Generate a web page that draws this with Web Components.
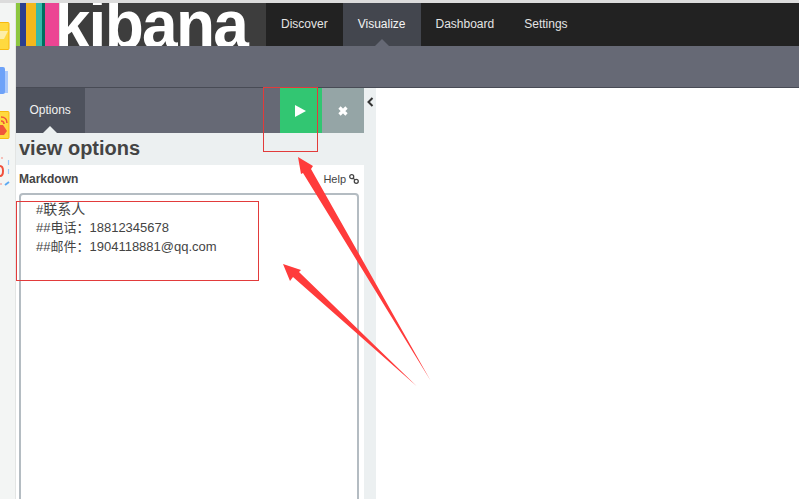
<!DOCTYPE html>
<html lang="zh">
<head>
<meta charset="utf-8">
<title>Kibana - Visualize</title>
<style>
  html, body { margin: 0; height: 100%; overflow: hidden; background: #fff; }
  body { font-family: "Liberation Sans", "Noto Sans CJK SC", sans-serif; }
</style>
</head>
<body>
<kb-app></kb-app>

<script>

class KbRail extends HTMLElement {

  constructor () {

    super();

    this.attachShadow( { mode: 'open' } ).innerHTML = `
      <style>
        :host { display: flex; flex-direction: column; flex: none; width: 15px; padding-top: 19px; gap: 17px; background: #f3f5f4; border-right: 1px solid #e3e5e4; overflow: hidden; }
        svg { display: block; flex: none; }
      </style>
      <svg width="10" height="29" viewBox="0 0 10 29">
        <rect x="-4" y=".5" width="13" height="27" rx="1" fill="#ffd93f" stroke="#f7b90f"/>
        <path d="M0 9h8l-4 8H0z" fill="#fdeea8"/>
      </svg>
      <svg width="10" height="27" viewBox="0 0 10 27" style="margin-top:-1px">
        <rect x="3" y="4" width="5" height="22" fill="#a9c8fb"/>
        <rect x="-3" y="0" width="8" height="27" rx="2" fill="#6da2f8"/>
      </svg>
      <svg width="10" height="29" viewBox="0 0 10 29">
        <rect x="-4" y=".5" width="13" height="27" rx="1" fill="#ffd93f" stroke="#f7b90f"/>
        <path d="M1 6c4 0 6 3 6 6M1 10c2 0 3 1 3 3" fill="none" stroke="#f0563a" stroke-width="1.6"/>
        <path d="M-1 14h4l4 6-3 4h-5z" fill="#f0563a"/>
      </svg>
      <svg width="10" height="29" viewBox="0 0 10 29">
        <path d="M1 1h2" stroke="#f58a7c" stroke-width="1.2"/>
        <path d="M0 9c2 0 3 2 3 5s-1 5-3 5" fill="none" stroke="#f0503c" stroke-width="2"/>
        <path d="M8.500 3v5M8.500 12v5" stroke="#9cc8f7" stroke-width="1.2"/>
        <path d="M5 28l4-3" stroke="#5ba9f2" stroke-width="1.8"/>
        <path d="M0 27h2" stroke="#f58a7c" stroke-width="1.2"/>
      </svg>
    `;

  }

}

class KbLogo extends HTMLElement {

  constructor () {

    super();

    this.attachShadow( { mode: 'open' } ).innerHTML = `
      <style>
        :host { display: flex; flex: none; width: 250px; height: 43px; background: #3d3d3d; overflow: hidden; }
        i { display: block; flex: none; }
        b { flex: none; color: #fff; font: bold 64px/43px "Liberation Sans", sans-serif; letter-spacing: -1.700px; margin: -1px 0 0 -4.300px; height: 44px; transform: scaleY(1.07); transform-origin: top; }
      </style>
      <i style="width:4px;background:#8cc63f"></i>
      <i style="width:6px;background:#2b3f8f"></i>
      <i style="width:10px;background:#f4b81c"></i>
      <i style="width:6px;background:#36b8ac"></i>
      <i style="width:3px;background:#006f5f"></i>
      <i style="width:14px;background:#ec4593"></i>
      <b>kibana</b>
    `;

  }

}

class KbNavItem extends HTMLElement {

  constructor () {

    super();

    this.attachShadow( { mode: 'open' } ).innerHTML = `
      <style>
        :host { display: flex; align-items: center; position: relative; padding: 0 15px 2px; font-size: 12px; color: #e4e4e4; }
        :host([active]) { background: #43464e; color: #f4f4f4; }
        :host([active])::after { content: ''; position: absolute; left: 50%; bottom: 0; margin-left: -7px; border: 7px solid transparent; border-top: 0; border-bottom-color: #666975; }
      </style>
      <slot></slot>
    `;

  }

}

class KbNavbar extends HTMLElement {

  constructor () {

    super();

    this.attachShadow( { mode: 'open' } ).innerHTML = `
      <style>
        :host { display: flex; flex: none; height: 43px; background: #222; }
      </style>
      <kb-logo></kb-logo>
      <kb-nav-item>Discover</kb-nav-item>
      <kb-nav-item active>Visualize</kb-nav-item>
      <kb-nav-item>Dashboard</kb-nav-item>
      <kb-nav-item>Settings</kb-nav-item>
    `;

  }

}

class KbSidebar extends HTMLElement {

  constructor () {

    super();

    this.attachShadow( { mode: 'open' } ).innerHTML = `
      <style>
        :host { display: flex; flex: none; width: 360px; background: #ecf0f1; overflow: hidden; }
        .column { width: 348px; flex: none; display: flex; flex-direction: column; }
        .toolbar { display: flex; height: 45px; flex: none; background: #666975; }
        .tab { position: relative; display: flex; align-items: center; padding: 0 14px 2px 13.500px; background: #4e525d; color: #f2f2f2; font-size: 12px; }
        .tab::after { content: ''; position: absolute; left: 50%; bottom: 0; margin-left: -7px; border: 7px solid transparent; border-top: 0; border-bottom-color: #ecf0f1; }
        .spacer { flex: 1; }
        .btn { width: 42px; display: flex; align-items: center; justify-content: center; }
        .apply { background: #32c672; padding-right: 1px; box-sizing: border-box; }
        .discard { background: #95a5a6; }
        h2 { margin: 0; height: 32px; flex: none; padding-left: 3px; color: #444; font: bold 20px/30px "Liberation Sans", sans-serif; }
        .toggle { flex: 1; padding-top: 9px; display: flex; justify-content: center; align-items: flex-start; }
        svg { display: block; }
      </style>
      <div class="column">
        <div class="toolbar">
          <div class="tab">Options</div>
          <div class="spacer"></div>
          <div class="btn apply">
            <svg width="11" height="12" viewBox="0 0 11 12"><path d="M0 0L11 6 0 12z" fill="#fff"/></svg>
          </div>
          <div class="btn discard">
            <svg width="10" height="10" viewBox="0 0 10 10"><path d="M1.500 1.500l7 7M8.500 1.500l-7 7" stroke="#fff" stroke-width="3.200"/></svg>
          </div>
        </div>
        <h2>view options</h2>
        <kb-markdown-editor></kb-markdown-editor>
      </div>
      <div class="toggle">
        <svg width="7" height="10" viewBox="0 0 7 10"><path d="M5.500 1L1.500 5l4 4" fill="none" stroke="#333" stroke-width="2"/></svg>
      </div>
    `;

  }

}

class KbMarkdownEditor extends HTMLElement {

  constructor () {

    super();

    this.attachShadow( { mode: 'open' } ).innerHTML = `
      <style>
        :host { display: flex; flex-direction: column; flex: 1; background: #fff; padding: 0 5px 0 3px; color: #444; }
        header { display: flex; align-items: center; justify-content: space-between; box-sizing: border-box; height: 28px; padding-bottom: 1px; flex: none; font-size: 11px; }
        header b { font-size: 12px; }
        .help { display: flex; align-items: center; gap: 3px; }
        .input { flex: none; height: 400px; box-sizing: border-box; border: 2px solid #b4bcc2; border-radius: 4px; padding: 4.500px 15px; font: 13px/18.500px "Liberation Sans", "Noto Sans CJK SC", sans-serif; white-space: pre; color: #444; }
        .input span { font-size: 14px; }
        svg { display: block; }
      </style>
      <header>
        <b>Markdown</b>
        <span class="help">Help
          <svg width="10" height="10" viewBox="0 0 11 11"><g fill="none" stroke="#444" stroke-width="1.400"><circle cx="3" cy="3" r="2.200"/><circle cx="8" cy="8" r="2.200"/><path d="M4.500 4.500l2 2"/></g></svg>
        </span>
      </header>
      <div class="input">#<span>联系人</span>
##电话：18812345678
##邮件：1904118881@qq.com</div>
    `;

  }

}

class KbAnnotations extends HTMLElement {

  constructor () {

    super();

    this.attachShadow( { mode: 'open' } ).innerHTML = `
      <style>
        :host { position: absolute; left: 0; top: 0; pointer-events: none; }
        svg { display: block; }
      </style>
      <svg width="799" height="499" viewBox="0 0 799 499">
        <g fill="none" stroke="#e23b3b">
          <rect x="263.500" y="87.500" width="54" height="64"/>
          <rect x="16.500" y="201.500" width="242" height="79"/>
        </g>
        <g fill="#ff3b3b">
          <path d="M298 157L313 166 311 169 430.500 380.500 303 173 301 174z"/>
          <path d="M283 264L301 270 299 272 416.500 386 293 277 290 281z"/>
        </g>
      </svg>
    `;

  }

}

class KbApp extends HTMLElement {

  constructor () {

    super();

    this.attachShadow( { mode: 'open' } ).innerHTML = `
      <style>
        :host { display: flex; flex-direction: column; height: 100vh; position: relative; overflow: hidden; background: #fff; }
        .strip { height: 3px; flex: none; background: #dcdcdc; }
        .body { display: flex; flex: 1; min-height: 0; }
        .main { flex: 1; min-width: 0; display: flex; flex-direction: column; }
        .subbar { height: 41px; flex: none; background: #666975; border-bottom: 1px solid #484b55; }
        .content { flex: 1; min-height: 0; display: flex; }
      </style>
      <div class="strip"></div>
      <div class="body">
        <kb-rail></kb-rail>
        <div class="main">
          <kb-navbar></kb-navbar>
          <div class="subbar"></div>
          <div class="content">
            <kb-sidebar></kb-sidebar>
          </div>
        </div>
      </div>
      <kb-annotations></kb-annotations>
    `;

  }

}

window.customElements.define( 'kb-rail', KbRail );
window.customElements.define( 'kb-logo', KbLogo );
window.customElements.define( 'kb-nav-item', KbNavItem );
window.customElements.define( 'kb-navbar', KbNavbar );
window.customElements.define( 'kb-markdown-editor', KbMarkdownEditor );
window.customElements.define( 'kb-sidebar', KbSidebar );
window.customElements.define( 'kb-annotations', KbAnnotations );
window.customElements.define( 'kb-app', KbApp );

</script>
</body>
</html>
